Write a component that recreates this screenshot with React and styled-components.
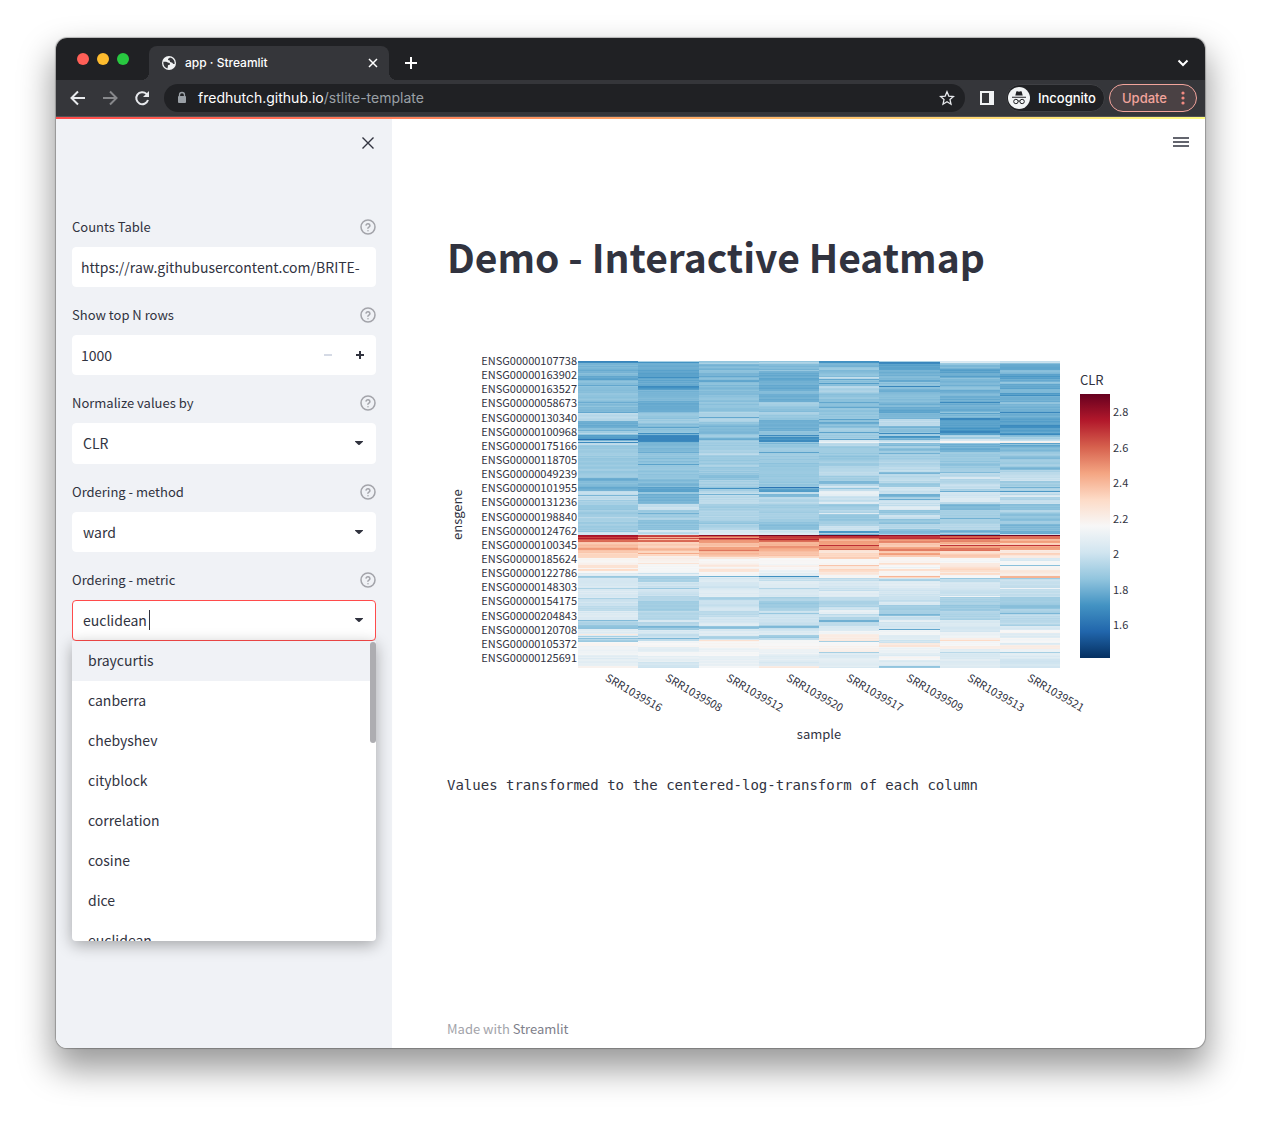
import React from "react";
import styled, { createGlobalStyle, css } from "styled-components";

const SANS = '"Noto Sans CJK SC", "Open Sans", sans-serif';
const CHROME = 'Inter, "Liberation Sans", sans-serif';
const INK = "#31333f";

const GlobalStyle = createGlobalStyle`
  *, *::before, *::after { box-sizing: border-box; }
  body { margin: 0; background: #fff; color: ${INK}; font-family: ${SANS}; }
  button, input { font: inherit; color: inherit; }
  button { padding: 0; border: 0; background: none; cursor: pointer; }
  svg { display: block; }
`;

/* ---------- window ---------- */

const Desktop = styled.div`
  min-height: 100vh;
  padding: 38px 56px 74px;
  display: flex;
`;

const Window = styled.div`
  flex: 1;
  min-width: 0;
  display: flex;
  flex-direction: column;
  border-radius: 11px;
  overflow: hidden;
  background: #fff;
  box-shadow: 0 0 1px 1px rgba(0, 0, 0, 0.25), 0 18px 34px 3px rgba(0, 0, 0, 0.4);
`;

const TabStrip = styled.div`
  height: 42px;
  display: flex;
  align-items: flex-end;
  padding: 0 16px 0 21px;
  background: #202124;
  color: #fff;
`;

const Lights = styled.div`
  display: flex;
  gap: 8px;
  width: 72px;
  align-self: center;
`;

const Light = styled.button`
  width: 12px;
  height: 12px;
  border-radius: 50%;
  background: ${(p) => p.$color};
`;

const Tab = styled.div`
  position: relative;
  width: 240px;
  height: 34px;
  padding: 0 11px 0 13px;
  display: flex;
  align-items: center;
  gap: 9px;
  border-radius: 8px 8px 0 0;
  background: #35363a;
  font: 500 12px/16px ${CHROME};

  &::before, &::after {
    content: "";
    position: absolute;
    bottom: 0;
    width: 8px;
    height: 8px;
  }
  &::before { left: -8px; background: radial-gradient(circle at 0 0, transparent 8px, #35363a 8px); }
  &::after { right: -8px; background: radial-gradient(circle at 100% 0, transparent 8px, #35363a 8px); }
`;

const TabTitle = styled.span`
  flex: 1;
`;

const NewTab = styled.button`
  margin-left: 15px;
  height: 34px;
`;

const TabMenu = styled.button`
  margin-left: auto;
  height: 34px;
`;

const Toolbar = styled.div`
  height: 37px;
  display: flex;
  align-items: center;
  padding: 0 8px 0 14px;
  background: #35363a;
  border-bottom: 1px solid #505155;
  color: #e8eaed;
  font: 500 13px/16px ${CHROME};
`;

const NavButtons = styled.div`
  display: flex;
  gap: 16px;
  margin-right: 14px;
`;

const NavButton = styled.button`
  &:disabled { color: #87888b; }
`;

const AddressBar = styled.div`
  flex: 1;
  height: 28px;
  display: flex;
  align-items: center;
  gap: 10px;
  padding: 0 10px 0 12px;
  border-radius: 14px;
  background: #202124;
`;

const Url = styled.span`
  flex: 1;
  color: #fff;
  font: 400 14px/18px ${CHROME};
  span { color: #9aa0a6; }
`;

const PanelButton = styled.button`
  margin: 0 12px 0 15px;
`;

const Incognito = styled.div`
  height: 28px;
  display: flex;
  align-items: center;
  gap: 8px;
  padding: 0 8px 0 1px;
  margin-right: 4px;
  border-radius: 14px;
  border: 1px solid #3f4044;
  background: #202124;
  color: #fff;
`;

const Update = styled.button`
  height: 28px;
  display: flex;
  align-items: center;
  gap: 12px;
  padding: 0 9px 0 12px;
  border: 1px solid #f2a49c;
  border-radius: 14px;
  background: #4a4144;
  color: #f2a49c;
`;

/* ---------- page ---------- */

const Decoration = styled.div`
  height: 2px;
  background: linear-gradient(90deg, #ff4b4b, #fffd80);
`;

const Page = styled.div`
  flex: 1;
  display: flex;
`;

const Sidebar = styled.aside`
  flex: 0 0 336px;
  padding: 16px;
  background: #f0f2f6;
`;

const CloseRow = styled.div`
  display: flex;
  justify-content: flex-end;
  height: 80px;
  align-items: flex-start;
`;

const Form = styled.form`
  display: flex;
  flex-direction: column;
  gap: 16px;
`;

const Field = styled.div`
  display: flex;
  flex-direction: column;
  gap: 8px;
  position: relative;
`;

const LabelRow = styled.div`
  display: flex;
  justify-content: space-between;
  align-items: center;
  height: 24px;
  label { font-size: 13px; line-height: 24px; }
`;

const Control = styled.div`
  height: ${(p) => (p.$tall ? 41 : 40)}px;
  display: flex;
  align-items: center;
  border: 1px solid ${(p) => (p.$focus ? "#ff4b4b" : "#fff")};
  border-radius: 4px;
  background: #fff;
  padding: 0 10px ${(p) => (p.$tall ? 1 : 0)}px 0;
`;

const TextInput = styled.input`
  flex: ${(p) => (p.$fit ? "none" : 1)};
  field-sizing: ${(p) => (p.$fit ? "content" : "fixed")};
  min-width: 0;
  height: 100%;
  padding: 0 0 0 ${(p) => p.$indent || 10}px;
  border: 0;
  outline: 0;
  background: transparent;
  font-size: 14px;
  caret-color: transparent;
`;

const Caret = styled.span`
  width: 1px;
  height: 20px;
  margin: 0 auto 0 2px;
  background: ${INK};
`;

const StepButton = styled.button`
  width: 32px;
  height: 38px;
  display: grid;
  place-items: center;
  color: ${(p) => (p.disabled ? "#d5dae5" : INK)};
`;

const Steps = styled.div`
  display: flex;
  margin-right: -11px;
`;

const Listbox = styled.ul`
  position: absolute;
  z-index: 2;
  top: 100%;
  left: 0;
  right: 0;
  height: 300px;
  margin: 0;
  padding: 0;
  overflow: hidden;
  list-style: none;
  border-radius: 0 0 4px 4px;
  background: #fff;
  box-shadow: 0 4px 16px rgba(0, 0, 0, 0.32);

  &::after {
    content: "";
    position: absolute;
    top: 1px;
    right: 0;
    width: 6px;
    height: 101px;
    border-radius: 3px;
    background: #adadb1;
  }
`;

const Option = styled.li`
  height: 40px;
  padding: 0 16px;
  font-size: 14px;
  line-height: 38px;
  ${(p) => p.$active && css`background: #f0f2f6;`}
`;

const Main = styled.main`
  flex: 1;
  min-width: 0;
  display: flex;
  flex-direction: column;
  padding: 13px 16px 9px 55px;
`;

const MenuButton = styled.button`
  align-self: flex-end;
  height: 20px;
`;

const Title = styled.h1`
  margin: 77px 0 64px;
  font-size: 39px;
  line-height: 54px;
  font-weight: 700;
`;

const Chart = styled.figure`
  margin: 0;
  display: grid;
  grid-template-columns: 34px 97px minmax(0, 482px) 20px auto;
  grid-template-rows: 307px auto;
  padding-top: 14px;
`;

const YTitle = styled.div`
  writing-mode: vertical-rl;
  transform: rotate(180deg);
  width: 20px;
  text-align: center;
  font-size: 13px;
  line-height: 20px;
`;

const YLabels = styled.div`
  display: flex;
  flex-direction: column;
  justify-content: space-between;
  height: 311px;
  margin-top: -8px;
  font-size: 11px;
  line-height: 14px;
  padding-right: 1px;
  white-space: nowrap;

  span { align-self: flex-end; }
`;

const Plot = styled.svg`
  width: 100%;
  height: 307px;
`;

const XAxis = styled.div`
  grid-column: 3;
`;

const XLabels = styled.div`
  display: grid;
  grid-template-columns: repeat(8, 1fr);
  height: 58px;
  font-size: 11px;
  line-height: 14px;
`;

const XLabel = styled.span`
  justify-self: center;
  width: 2px;
  white-space: nowrap;
  span {
    display: block;
    width: max-content;
    transform-origin: 0 50%;
    transform: rotate(30deg);
    margin-top: 1px;
  }
`;

const XTitle = styled.div`
  text-align: center;
  font-size: 13px;
  line-height: 16px;
`;

const Legend = styled.div`
  grid-column: 5;
  grid-row: 1;
  padding-top: 9px;
  font-size: 13px;
  line-height: 20px;
`;

const Scale = styled.div`
  display: flex;
  margin-top: 4px;
  gap: 3px;
`;

const ScaleBar = styled.div`
  width: 30px;
  height: 264px;
  background: linear-gradient(0deg, ${(p) => p.$colors});
`;

const Ticks = styled.div`
  display: flex;
  flex-direction: column;
  justify-content: space-between;
  height: 227px;
  margin-top: 10px;
  font-size: 11px;
  line-height: 14px;
`;

const Note = styled.p`
  margin: 33px 0 0;
  font: 400 14px/20px "DejaVu Sans Mono", "Liberation Mono", monospace;
`;

const Footer = styled.footer`
  margin-top: auto;
  font-size: 13px;
  line-height: 20px;
  color: #a3a4aa;
  a { color: #7e808a; text-decoration: none; }
`;

/* ---------- heat map data: "first row, value" runs for every sample ---------- */

const STOPS = [
  [5, 48, 97], [33, 102, 172], [67, 147, 195], [146, 197, 222], [209, 229, 240], [247, 247, 247],
  [253, 219, 199], [244, 165, 130], [214, 96, 77], [178, 24, 43], [103, 0, 31],
];

const ROWS = 307;

const SAMPLES = [
  ["SRR1039516", "0 18,2 27,9 25,12 28,15 23,19 28,24 24,25 29,41 25,42 28,51 24,52 36,60 25,67 30,69 26,70 31,72 36,73 30,74 22,78 12,79 26,80 36,81 18,82 36,84 31,117 24,120 27,125 25,130 37,134 27,135 36,139 33,144 30,149 32,156 34,160 32,170 30,171 39,174 90,176 84,177 90,178 82,179 78,181 63,184 66,187 70,189 63,192 60,197 51,204 57,207 51,208 58,210 50,212 43,215 31,217 41,227 34,228 42,237 34,238 39,245 36,250 42,259 28,260 34,264 30,268 44,273 55,274 44,275 33,276 41,277 29,278 36,279 32,281 50,285 47,294 44,300 45,305 51"],
  ["SRR1039508", "0 34,1 20,2 25,9 23,16 19,17 24,25 18,27 22,29 26,40 24,51 30,58 32,62 29,66 23,67 29,72 19,73 27,74 17,80 18,81 27,91 25,92 29,103 23,104 30,118 27,126 23,131 30,133 26,143 36,146 38,149 31,152 26,153 31,157 34,159 29,169 41,171 35,173 41,174 84,176 68,177 83,178 66,179 78,181 62,187 66,190 60,192 69,193 60,195 52,202 57,203 49,212 39,213 45,215 33,221 39,227 31,228 39,235 35,240 32,250 35,259 41,261 34,265 27,267 31,269 41,273 38,277 27,278 36,280 49,286 45,291 48,295 45,301 40"],
  ["SRR1039512", "0 30,2 34,3 27,9 29,12 26,15 24,16 28,19 24,21 28,30 27,34 29,51 34,56 24,57 34,61 30,64 27,73 31,77 24,79 32,92 36,94 31,103 33,106 31,114 29,119 33,126 30,127 19,128 32,130 36,133 26,134 36,140 37,143 32,149 34,160 30,163 34,169 42,174 94,175 80,176 72,177 89,178 79,179 72,182 64,186 70,189 77,190 66,194 62,196 55,198 50,203 54,206 50,208 55,211 49,215 26,216 42,222 40,228 43,236 34,239 38,247 41,250 36,256 40,262 42,265 29,268 40,270 43,275 34,278 41,279 58,280 50,287 47,291 49,295 45,305 50"],
  ["SRR1039520", "0 30,1 33,3 27,9 31,10 24,19 25,30 28,33 25,41 32,45 29,51 33,54 30,59 25,70 30,74 18,75 27,76 19,78 21,79 17,81 31,82 27,83 31,91 23,92 31,102 30,110 31,119 30,126 13,127 26,128 22,131 36,133 28,136 35,143 32,149 33,160 30,163 29,169 39,172 43,174 98,175 84,178 89,179 78,181 66,185 72,187 68,190 64,195 60,197 50,202 49,204 52,206 49,209 47,212 44,215 19,216 38,220 43,227 35,228 41,236 34,240 31,247 33,250 38,252 31,253 39,260 38,264 34,265 27,267 38,270 42,274 31,277 36,279 50,288 47,293 44,300 42,305 54"],
  ["SRR1039517", "0 19,2 26,6 30,9 28,16 36,18 24,19 29,22 22,23 29,25 35,27 33,32 29,41 24,42 28,46 24,47 30,58 23,59 30,61 23,63 29,67 32,71 23,72 32,78 23,79 42,81 47,82 36,85 31,95 29,98 32,105 35,110 36,115 32,120 27,123 35,125 40,127 30,128 37,130 45,135 38,141 43,143 31,149 35,152 44,153 30,160 33,165 38,170 20,172 34,173 26,174 98,175 86,177 78,178 67,180 70,184 87,185 72,188 79,189 57,192 60,196 62,198 50,204 64,205 54,208 60,211 55,214 49,217 37,220 41,227 38,230 43,236 36,240 34,246 38,249 45,253 37,256 34,259 25,261 37,265 42,270 48,273 54,280 33,281 50,287 53,291 33,292 42,297 44,302 43"],
  ["SRR1039509", "0 34,1 17,3 23,9 25,15 28,19 24,21 29,25 17,26 29,28 25,31 28,41 26,44 28,46 24,52 27,58 37,65 26,67 29,72 18,73 33,75 20,77 26,79 38,81 44,82 28,85 34,87 28,90 32,92 26,93 32,98 34,106 36,111 27,113 36,122 31,126 39,130 38,133 25,136 34,138 25,139 38,145 42,149 29,152 33,154 38,158 30,163 35,168 29,170 27,173 34,174 94,175 86,178 72,180 74,182 62,186 70,188 76,190 62,192 71,194 62,196 51,202 57,204 48,208 58,210 50,215 67,216 60,217 41,218 33,220 43,227 40,235 38,241 42,244 32,253 28,255 38,259 46,261 40,268 24,269 48,274 44,279 40,282 55,286 47,292 43,295 49,299 43,305 30"],
  ["SRR1039513", "0 42,2 31,4 27,8 22,12 25,15 23,17 28,20 26,25 29,29 24,32 28,35 25,41 18,42 25,51 30,52 23,53 27,57 18,59 23,66 21,70 17,72 22,74 35,76 32,78 41,80 51,82 31,83 26,87 25,91 31,100 30,107 32,111 28,112 36,116 42,118 34,123 38,128 33,130 25,131 40,137 42,141 36,143 27,149 33,157 26,158 33,163 35,169 26,172 34,173 27,174 98,175 80,177 90,178 74,181 67,183 63,184 86,185 70,187 77,190 58,193 63,197 49,202 55,206 59,211 54,212 59,214 49,217 31,218 37,221 41,228 38,235 48,236 33,244 31,250 34,257 34,259 42,264 41,268 41,271 47,277 53,279 60,280 49,285 53,288 44,291 36,292 42,298 43"],
  ["SRR1039521", "0 38,2 29,3 24,9 27,13 22,15 21,18 25,21 29,23 24,28 27,32 22,34 19,35 25,41 29,43 26,51 17,52 25,57 23,64 19,67 23,72 19,74 28,76 33,78 37,80 48,81 53,82 23,83 30,84 24,86 27,91 31,95 28,98 32,106 27,109 33,111 37,116 38,120 32,126 26,127 33,130 21,131 37,134 42,136 34,139 38,143 28,149 34,152 29,160 32,163 27,169 29,170 24,173 39,174 98,175 78,178 66,180 71,182 60,184 86,185 70,189 54,192 61,194 54,197 42,200 49,204 29,205 50,209 56,212 52,215 66,217 32,218 38,227 48,228 37,236 32,244 28,248 34,252 27,253 36,259 36,263 33,265 42,269 50,272 43,277 49,282 43,284 53,288 46,291 33,292 43,298 40"],
];

const colorOf = (value) => {
  const v = Math.max(0, Math.min(99.9, value)) / 10;
  const i = Math.floor(v);
  return `rgb(${STOPS[i].map((c, k) => Math.round(c + (STOPS[i + 1][k] - c) * (v - i))).join(",")})`;
};

const jitter = (row, col) => {
  const shared = Math.sin(row * 12.9898) * 43758.5453;
  const own = Math.sin(row * 78.233 + col * 37.719) * 24634.6345;
  return (shared - Math.floor(shared) - 0.5) * 1.2 + (own - Math.floor(own) - 0.3) * 2.6;
};

const expand = (text, col) => {
  const runs = text.split(",").map((run) => run.split(" ").map(Number));
  const cells = [];
  runs.forEach(([start, value], i) => {
    const end = i + 1 < runs.length ? runs[i + 1][0] : ROWS;
    for (let row = start; row < end; row += 1) {
      cells.push(colorOf(value + (end - start > 1 ? jitter(row, col) : 0)));
    }
  });
  return cells;
};

const CELLS = SAMPLES.map(([, runs], col) => expand(runs, col));
const EDGES = [0, 60, 121, 181, 241, 301, 362, 422, 482];

const GENES = [
  "107738", "163902", "163527", "058673", "130340", "100968", "175166", "118705", "049239", "101955", "131236",
  "198840", "124762", "100345", "185624", "122786", "148303", "154175", "204843", "120708", "105372", "125691",
];

const METRICS = ["braycurtis", "canberra", "chebyshev", "cityblock", "correlation", "cosine", "dice", "euclidean"];

/* ---------- drawings ---------- */

const Line = ({ size = 16, box = 16, width = 2, children }) => (
  <svg width={size} height={size} viewBox={`0 0 ${box} ${box}`} fill="none" stroke="currentColor" strokeWidth={width} aria-hidden="true">
    {children}
  </svg>
);

const Globe = () => (
  <svg width="14" height="14" viewBox="0 0 14 14" aria-hidden="true">
    <circle cx="7" cy="7" r="7" fill="#f1f3f4" />
    <path d="M1.400 5.800h2.800c.9 0 1.300.9 2.200.9s1.600.3 1.600 1.200-.7 1-1.500 1.100c-.8.2-.5 1.100-.7 1.900l-.4 1.500C3 11.900 1 9.300 1.400 5.800zM7.800 1.400c-.2 1-1.300.8-1.700 1.500-.4.800.2 1.300 1 1.300.9 0 .7.9.9 1.500.3.800 1.300.5 1.900.9.7.4.7 1.200 1.500 1.300h1.200C13 4.500 10.900 1.800 7.800 1.400z" fill="#35363a" />
  </svg>
);

const Lock = () => (
  <svg width="12" height="14" viewBox="0 0 12 14" aria-hidden="true">
    <path d="M3.500 6V4a2.500 2.500 0 0 1 5 0v2" fill="none" stroke="#9aa0a6" strokeWidth="1.300" />
    <rect x="2" y="5" width="8" height="7" rx="1" fill="#9aa0a6" />
  </svg>
);

const Spy = () => (
  <svg width="22" height="22" viewBox="0 0 22 22" aria-hidden="true">
    <circle cx="11" cy="11" r="11" fill="#f1f3f4" />
    <path d="M7.300 8.600 8.300 4.800c.2-.5.600-.6 1-.5l1.700.5 1.700-.5c.4-.1.800 0 1 .5l1 3.800zM4 9.800h14v1H4z" fill="#202124" />
    <g fill="none" stroke="#202124" strokeWidth="1">
      <circle cx="7.900" cy="14.500" r="2.200" />
      <circle cx="14.100" cy="14.500" r="2.200" />
      <path d="M10 14.200q1-.7 2 0" />
    </g>
  </svg>
);

const Dots = () => (
  <svg width="8" height="14" viewBox="0 0 8 14" fill="#f28b82" aria-hidden="true">
    <circle cx="4" cy="2" r="1.600" /><circle cx="4" cy="7" r="1.600" /><circle cx="4" cy="12" r="1.600" />
  </svg>
);

const Help = () => (
  <svg width="16" height="16" viewBox="0 0 24 24" fill="none" stroke="#a3a4aa" strokeWidth="2.300" strokeLinecap="round" strokeLinejoin="round" aria-hidden="true">
    <circle cx="12" cy="12" r="10.500" />
    <path d="M9.100 9a3 3 0 0 1 5.800 1c0 2-3 2.500-3 4M12 17.500h.01" />
  </svg>
);

const Arrow = () => (
  <svg width="12" height="6" viewBox="0 0 12 6" aria-hidden="true">
    <path d="M2.300 1h7.400c.4 0 .5.400.2.700L6.700 4.700a1 1 0 0 1-1.400 0L2.100 1.700c-.3-.3-.2-.7.200-.7z" fill={INK} />
  </svg>
);

function Row({ id, label, children }) {
  return (
    <Field>
      <LabelRow>
        <label htmlFor={id}>{label}</label>
        <button type="button" aria-label={`Help: ${label}`}><Help /></button>
      </LabelRow>
      {children}
    </Field>
  );
}

export default function App() {
  return (
    <Desktop>
      <GlobalStyle />
      <Window>
        <TabStrip>
          <Lights>
            <Light $color="#ff5f57" aria-label="Close window" />
            <Light $color="#febc2e" aria-label="Minimize window" />
            <Light $color="#28c840" aria-label="Zoom window" />
          </Lights>
          <Tab>
            <Globe />
            <TabTitle>app · Streamlit</TabTitle>
            <button aria-label="Close tab">
              <Line size={10} box={10} width={1.5}><path d="m1 1 8 8M9 1 1 9" /></Line>
            </button>
          </Tab>
          <NewTab aria-label="New tab">
            <Line size={14} box={14}><path d="M7 1v12M1 7h12" /></Line>
          </NewTab>
          <TabMenu aria-label="Search tabs">
            <Line size={12} box={12}><path d="m1.500 3.500 4.500 4.500 4.500-4.500" /></Line>
          </TabMenu>
        </TabStrip>
        <Toolbar>
          <NavButtons>
            <NavButton aria-label="Back"><Line><path d="M15 8H2M8 1.500 1.500 8 8 14.500" /></Line></NavButton>
            <NavButton aria-label="Forward" disabled><Line><path d="M1 8h13M8 1.500 14.500 8 8 14.500" /></Line></NavButton>
            <NavButton aria-label="Reload">
              <Line><path d="M14 10A6 6 0 1 1 12.500 3.900L14 5.400" /><path d="M15 1v6H9z" fill="currentColor" stroke="none" /></Line>
            </NavButton>
          </NavButtons>
          <AddressBar>
            <Lock />
            <Url>fredhutch.github.io<span>/stlite-template</span></Url>
            <button aria-label="Bookmark">
              <Line width={1.3}><path d="m8 1.800 1.800 4.300 4.700.4-3.500 3.100 1 4.600-4-2.500-4 2.500 1-4.600-3.500-3.100 4.700-.4z" /></Line>
            </button>
          </AddressBar>
          <PanelButton aria-label="Side panel">
            <svg width="14" height="14" viewBox="0 0 14 14" aria-hidden="true">
              <path d="M0 0h14v14H0zM2 2v10h7V2z" fill="#f1f3f4" fillRule="evenodd" />
            </svg>
          </PanelButton>
          <Incognito><Spy />Incognito</Incognito>
          <Update>Update<Dots /></Update>
        </Toolbar>
        <Decoration />
        <Page>
          <Sidebar>
            <CloseRow>
              <button aria-label="Close sidebar">
                <Line width={1.4}><path d="m2.500 2.500 11 11M13.500 2.500l-11 11" /></Line>
              </button>
            </CloseRow>
            <Form onSubmit={(e) => e.preventDefault()}>
              <Row id="counts" label="Counts Table">
                <Control>
                  <TextInput id="counts" $indent={8} defaultValue="https://raw.githubusercontent.com/BRITE-" />
                </Control>
              </Row>
              <Row id="rows" label="Show top N rows">
                <Control>
                  <TextInput id="rows" $indent={8} inputMode="numeric" defaultValue="1000" />
                  <Steps>
                    <StepButton type="button" disabled aria-label="Decrease">
                      <Line size={8} box={8}><path d="M0 4h8" /></Line>
                    </StepButton>
                    <StepButton type="button" aria-label="Increase">
                      <Line size={8} box={8}><path d="M0 4h8M4 0v8" /></Line>
                    </StepButton>
                  </Steps>
                </Control>
              </Row>
              <Row id="normalize" label="Normalize values by">
                <Control $tall><TextInput id="normalize" role="combobox" aria-expanded="false" defaultValue="CLR" /><Arrow /></Control>
              </Row>
              <Row id="method" label="Ordering - method">
                <Control><TextInput id="method" role="combobox" aria-expanded="false" defaultValue="ward" /><Arrow /></Control>
              </Row>
              <Row id="metric" label="Ordering - metric">
                <Control $tall $focus>
                  <TextInput id="metric" $fit role="combobox" aria-expanded="true" aria-controls="metric-list" defaultValue="euclidean" />
                  <Caret />
                  <Arrow />
                </Control>
                <Listbox id="metric-list" role="listbox">
                  {METRICS.map((name, i) => (
                    <Option key={name} role="option" aria-selected={i === 0} $active={i === 0}>{name}</Option>
                  ))}
                </Listbox>
              </Row>
            </Form>
          </Sidebar>
          <Main>
            <MenuButton aria-label="Main menu">
              <Line width={1.6}><path d="M0 4h16M0 8h16M0 12h16" /></Line>
            </MenuButton>
            <Title>Demo - Interactive Heatmap</Title>
            <Chart>
              <YTitle>ensgene</YTitle>
              <YLabels>{GENES.map((g) => <span key={g}>ENSG00000{g}</span>)}</YLabels>
              <Plot viewBox="0 0 482 307" preserveAspectRatio="none" shapeRendering="crispEdges" role="img" aria-label="CLR by gene and sample">
                {CELLS.map((cells, col) => cells.map((fill, row) => (
                  <rect key={`${col}-${row}`} x={EDGES[col]} y={row} width={EDGES[col + 1] - EDGES[col]} height="1" fill={fill} />
                )))}
              </Plot>
              <Legend>
                CLR
                <Scale>
                  <ScaleBar $colors={STOPS.map((c) => `rgb(${c.join(",")})`).join(",")} />
                  <Ticks>{["2.8", "2.6", "2.4", "2.2", "2", "1.8", "1.6"].map((t) => <span key={t}>{t}</span>)}</Ticks>
                </Scale>
              </Legend>
              <XAxis>
                <XLabels>{SAMPLES.map(([name]) => <XLabel key={name}><span>{name}</span></XLabel>)}</XLabels>
                <XTitle>sample</XTitle>
              </XAxis>
            </Chart>
            <Note>Values transformed to the centered-log-transform of each column</Note>
            <Footer>Made with <a href="#streamlit">Streamlit</a></Footer>
          </Main>
        </Page>
      </Window>
    </Desktop>
  );
}
